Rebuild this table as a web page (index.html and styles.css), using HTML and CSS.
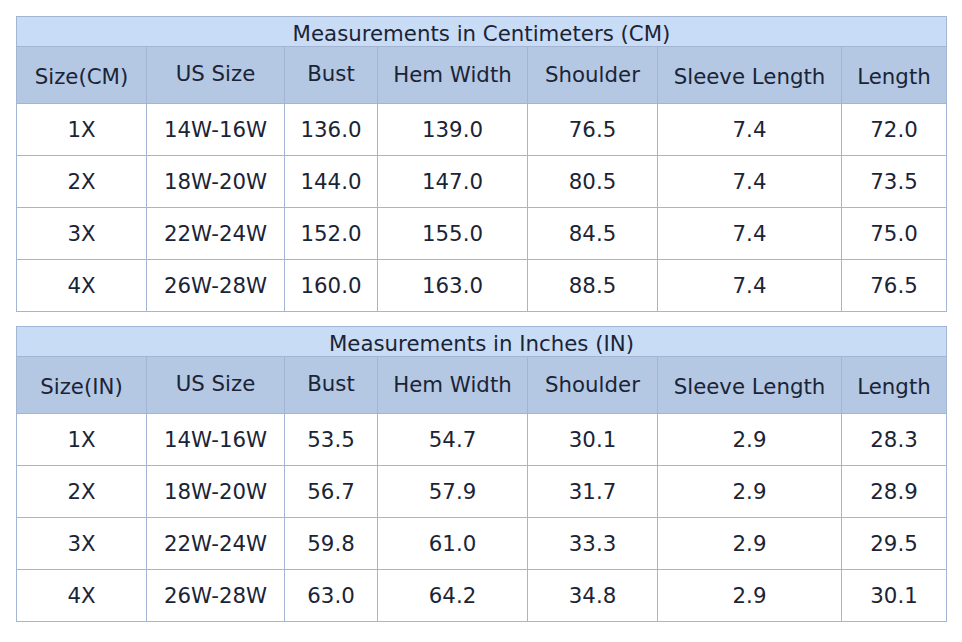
FILE: index.html
```html
<!DOCTYPE html>
<html lang="en">
<head>
    <meta charset="UTF-8">
    <title>Size Chart</title>
    <link rel="stylesheet" href="styles.css">
</head>
<body>
    <table class="chart">
        <colgroup>
            <col style="width: 130px"><col style="width: 138px"><col style="width: 93px">
            <col style="width: 150px"><col style="width: 130px"><col style="width: 184px"><col style="width: 105px">
        </colgroup>
        <tr class="title"><td colspan="7">Measurements in Centimeters (CM)</td></tr>
        <tr class="head">
            <td class="low">Size(CM)</td><td>US Size</td><td>Bust</td><td class="mid">Hem Width</td>
            <td class="mid">Shoulder</td><td class="low">Sleeve Length</td><td class="low">Length</td>
        </tr>
        <tr><td>1X</td><td>14W-16W</td><td>136.0</td><td>139.0</td><td>76.5</td><td>7.4</td><td>72.0</td></tr>
        <tr><td>2X</td><td>18W-20W</td><td>144.0</td><td>147.0</td><td>80.5</td><td>7.4</td><td>73.5</td></tr>
        <tr><td>3X</td><td>22W-24W</td><td>152.0</td><td>155.0</td><td>84.5</td><td>7.4</td><td>75.0</td></tr>
        <tr><td>4X</td><td>26W-28W</td><td>160.0</td><td>163.0</td><td>88.5</td><td>7.4</td><td>76.5</td></tr>
    </table>

    <table class="chart">
        <colgroup>
            <col style="width: 130px"><col style="width: 138px"><col style="width: 93px">
            <col style="width: 150px"><col style="width: 130px"><col style="width: 184px"><col style="width: 105px">
        </colgroup>
        <tr class="title"><td colspan="7">Measurements in Inches (IN)</td></tr>
        <tr class="head">
            <td class="low">Size(IN)</td><td>US Size</td><td>Bust</td><td class="mid">Hem Width</td>
            <td class="mid">Shoulder</td><td class="low">Sleeve Length</td><td class="low">Length</td>
        </tr>
        <tr><td>1X</td><td>14W-16W</td><td>53.5</td><td>54.7</td><td>30.1</td><td>2.9</td><td>28.3</td></tr>
        <tr><td>2X</td><td>18W-20W</td><td>56.7</td><td>57.9</td><td>31.7</td><td>2.9</td><td>28.9</td></tr>
        <tr><td>3X</td><td>22W-24W</td><td>59.8</td><td>61.0</td><td>33.3</td><td>2.9</td><td>29.5</td></tr>
        <tr><td>4X</td><td>26W-28W</td><td>63.0</td><td>64.2</td><td>34.8</td><td>2.9</td><td>30.1</td></tr>
    </table>
</body>
</html>
```

FILE: styles.css
```css
* {
    margin: 0;
    padding: 0;
    box-sizing: border-box;
}

body {
    font-family: "DejaVu Sans", Verdana, sans-serif;
    background: #fff;
    color: #1b2436;
    padding: 16px 0 0 16px;
}

.chart {
    border-collapse: collapse;
    table-layout: fixed;
    width: 931px;
    font-size: 21.3px;
    margin-bottom: 14px;
}

.chart td {
    border: 1px solid #a3b5d3;
    text-align: center;
    vertical-align: middle;
    height: 52px;
    padding: 0;
    white-space: nowrap;
}

.chart .title td {
    background: #c9dcf6;
    height: 30px;
    line-height: 20px;
    padding-top: 4px;
}

.chart .head td {
    background: #b4c8e4;
    height: 57px;
    padding-bottom: 3px;
}

.chart .head td.mid {
    padding-bottom: 1px;
}

.chart .head td.low {
    padding-bottom: 0;
    padding-top: 3px;
}
```
